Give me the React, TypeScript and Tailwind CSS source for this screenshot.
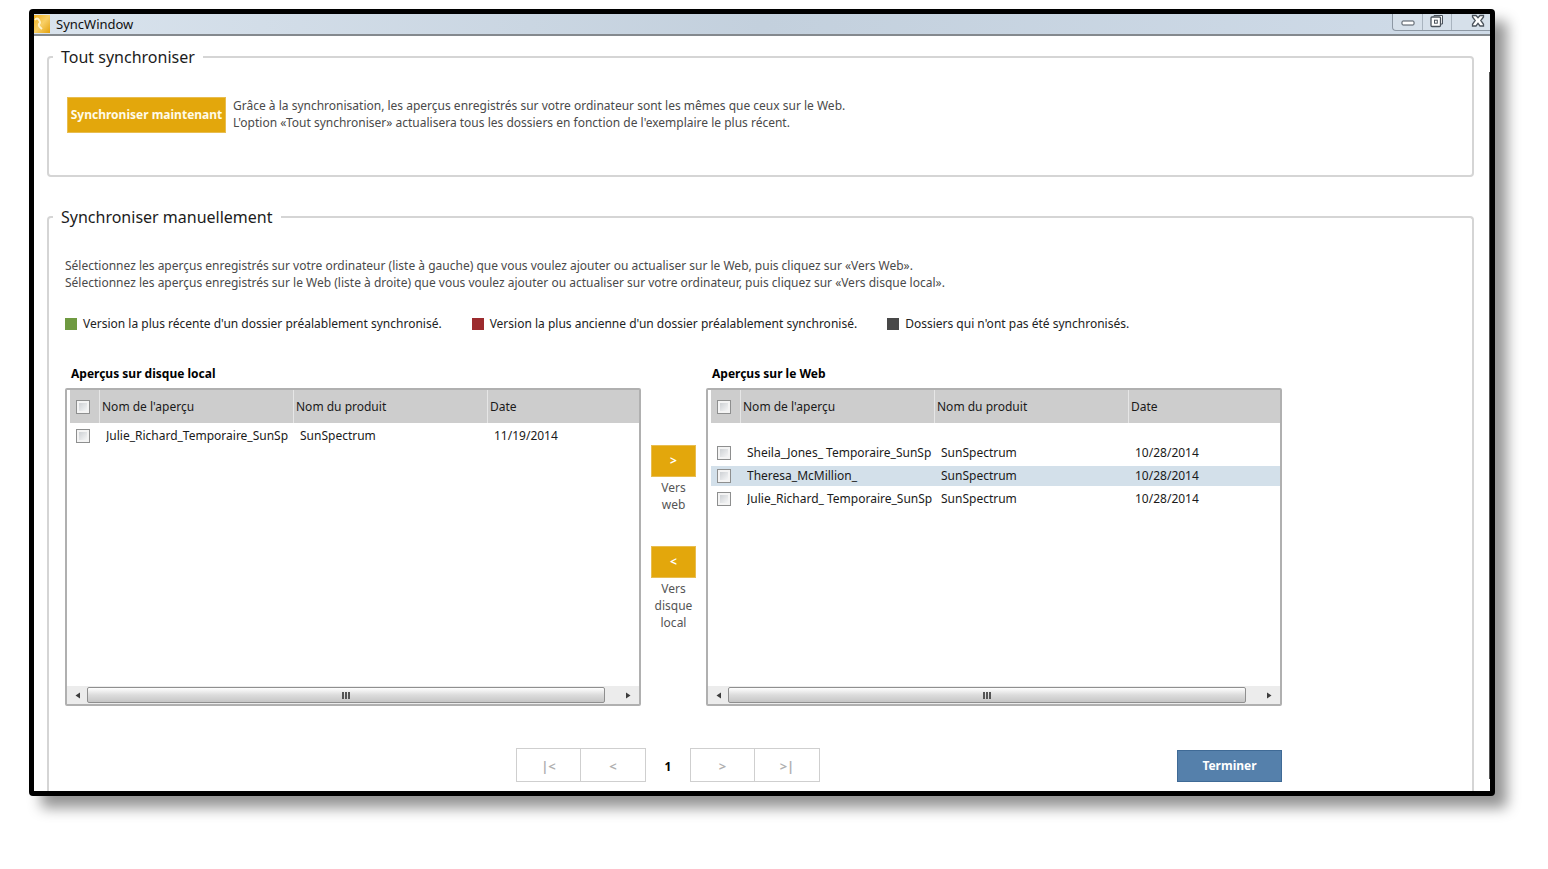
import React from 'react';

type Preview = {
  name: string;
  product: string;
  date: string;
  selected?: boolean;
};

const LOCAL_PREVIEWS: Preview[] = [
  { name: 'Julie_Richard_Temporaire_SunSp', product: 'SunSpectrum', date: '11/19/2014' },
];

const WEB_PREVIEWS: Preview[] = [
  { name: 'Sheila_Jones_ Temporaire_SunSp', product: 'SunSpectrum', date: '10/28/2014' },
  { name: 'Theresa_McMillion_', product: 'SunSpectrum', date: '10/28/2014', selected: true },
  { name: 'Julie_Richard_ Temporaire_SunSp', product: 'SunSpectrum', date: '10/28/2014' },
];

const LEGEND = [
  { color: 'bg-[#6f9a41]', label: "Version la plus récente d'un dossier préalablement synchronisé." },
  { color: 'bg-[#9c2b2e]', label: "Version la plus ancienne d'un dossier préalablement synchronisé." },
  { color: 'bg-[#484848]', label: "Dossiers qui n'ont pas été synchronisés." },
];

const Checkbox: React.FC<{ label: string }> = ({ label }) => (
  <input
    type="checkbox"
    aria-label={label}
    className="block size-[14px] appearance-none border border-[#8e8f8f] bg-linear-to-br from-[#c4c8cc] to-white shadow-[inset_0_0_0_2px_#f4f4f4] checked:bg-[#5580ab]"
  />
);

const TitleBar: React.FC = () => (
  <header className="flex h-[22px] items-start justify-between border-b-2 border-[#84898e] bg-linear-to-r from-[#d9e3ed] via-[#c3d0dd] to-[#cfdbe8]">
    <div className="flex items-center gap-[6px]">
      <svg width="16" height="18" viewBox="0 0 16 18" aria-hidden="true">
        <defs>
          <linearGradient id="appIcon" x1="0" y1="0" x2="1" y2="1">
            <stop offset="0" stopColor="#f0b020" />
            <stop offset="0.5" stopColor="#f8cf66" />
            <stop offset="1" stopColor="#e3a00c" />
          </linearGradient>
        </defs>
        <rect width="16" height="18" fill="url(#appIcon)" />
        <path d="M1 5 Q3 2 5 5 Q7 8 5 9 Q4 11 8 14" fill="none" stroke="#fff3c9" strokeWidth="2" />
      </svg>
      <h1 className="text-[13px] leading-5 text-[#111]">SyncWindow</h1>
    </div>
    <div className="flex h-[17px] rounded-bl border-b border-l border-[#8d98a4] bg-[#d6e0ea]">
      <button type="button" aria-label="Réduire" className="flex w-[30px] items-center justify-center border-r border-[#a9b4bf]">
        <svg width="14" height="14" viewBox="0 0 14 14">
          <rect x="1" y="6" width="12" height="4" rx="1" fill="#fff" stroke="#4b535c" />
        </svg>
      </button>
      <button type="button" aria-label="Restaurer" className="flex w-[29px] items-start justify-center border-r border-[#a9b4bf]">
        <svg width="14" height="14" viewBox="0 0 14 14">
          <path d="M4 2.5 V1.5 H12.5 V10 H11" fill="#fff" stroke="#4b535c" />
          <rect x="1" y="3" width="9.5" height="9.5" rx="1" fill="#fff" stroke="#4b535c" strokeWidth="1.3" />
          <rect x="4.5" y="6.2" width="2.8" height="3" fill="#fff" stroke="#4b535c" />
        </svg>
      </button>
      <button type="button" aria-label="Fermer" className="flex w-[38px] items-start justify-end pr-[5px]">
        <svg width="14" height="14" viewBox="0 0 14 14">
          <path
            d="M1.5 1.5 H5 L7 3.8 L9 1.5 H12.5 V3 L9.8 6.5 L12.5 10.3 V12 H9 L7 9.4 L5 12 H1.5 V10.3 L4.2 6.5 L1.5 3 Z"
            fill="#fff"
            stroke="#4b535c"
            strokeWidth="1.3"
          />
        </svg>
      </button>
    </div>
  </header>
);

const GroupBox: React.FC<{ title: string; className: string; children: React.ReactNode }> = ({
  title,
  className,
  children,
}) => (
  <fieldset className={`min-w-0 rounded border-2 border-[#d5d5d5] pl-4 ${className}`}>
    <legend className="-ml-3 px-2 text-base leading-6 text-[#1c1c1c]">{title}</legend>
    {children}
  </fieldset>
);

const ScrollBar: React.FC = () => (
  <div className="flex h-[18px] items-stretch bg-[#ececec]">
    <button type="button" aria-label="Défiler à gauche" className="flex w-5 items-center justify-center">
      <svg width="5" height="7" viewBox="0 0 5 7">
        <path d="M5 0.5 V6.5 L0.5 3.5 Z" fill="#3c3c3c" />
      </svg>
    </button>
    <div className="my-px flex flex-1 items-center justify-center gap-px rounded-xs border border-[#8f8f8f] bg-linear-to-b from-white via-[#dcdcdc] to-[#c6c6c6]">
      <span className="h-[7px] w-[2px] bg-[#555]" />
      <span className="h-[7px] w-[2px] bg-[#555]" />
      <span className="h-[7px] w-[2px] bg-[#555]" />
    </div>
    <button type="button" aria-label="Défiler à droite" className="ml-3 flex w-[22px] items-center justify-center">
      <svg width="5" height="7" viewBox="0 0 5 7">
        <path d="M0 0.5 V6.5 L4.5 3.5 Z" fill="#3c3c3c" />
      </svg>
    </button>
  </div>
);

const PreviewList: React.FC<{ title: string; items: Preview[]; topGap: string }> = ({ title, items, topGap }) => (
  <section className="min-w-0 flex-1">
    <h2 className="pb-[5px] pl-[6px] text-xs leading-[18px] font-bold text-black">{title}</h2>
    <div className="flex h-[318px] flex-col justify-between rounded-xs border-2 border-[#b0b0b0]">
      <div className="pl-[3px]">
        <table className="w-full table-fixed border-separate border-spacing-0 text-left text-xs text-[#1a1a1a]">
          <colgroup>
            <col className="w-[29px]" />
            <col className="w-[194px]" />
            <col className="w-[194px]" />
            <col />
          </colgroup>
          <thead className="bg-[#cdcdcd]">
            <tr className="h-[33px]">
              <th className="pl-[6px]">
                <Checkbox label={`Tout sélectionner : ${title}`} />
              </th>
              <th className="border-l border-[#e6e6e6] pl-[2px] font-normal">Nom de l'aperçu</th>
              <th className="border-l border-[#e6e6e6] pl-[2px] font-normal">Nom du produit</th>
              <th className="border-l border-[#e6e6e6] pl-[2px] font-normal">Date</th>
            </tr>
          </thead>
          <tbody>
            <tr aria-hidden="true">
              <td colSpan={4} className={topGap} />
            </tr>
            {items.map((item) => (
              <tr
                key={item.name}
                className={`h-[23px] *:border-b-3 *:border-white *:bg-clip-padding ${item.selected ? '*:bg-[#d3e0ea]' : ''}`}
              >
                <td className="pl-[6px]">
                  <Checkbox label={item.name} />
                </td>
                <td className="pl-[7px]">
                  <div className="overflow-hidden whitespace-nowrap">{item.name}</div>
                </td>
                <td className="pl-[7px]">{item.product}</td>
                <td className="pl-[7px]">{item.date}</td>
              </tr>
            ))}
          </tbody>
        </table>
      </div>
      <ScrollBar />
    </div>
  </section>
);

const TransferButton: React.FC<{ id: string; symbol: string; label: string }> = ({ id, symbol, label }) => (
  <div className="flex w-[45px] flex-col items-center gap-[2px]">
    <button
      id={id}
      type="button"
      aria-label={label}
      className="h-8 w-full border border-[#e8bd50] bg-[#e3a70c] text-xs font-bold text-white"
    >
      {symbol}
    </button>
    <label htmlFor={id} className="text-center text-xs leading-[17px] text-[#555]">
      {label}
    </label>
  </div>
);

const PagerGroup: React.FC<{ symbols: { text: string; label: string }[] }> = ({ symbols }) => (
  <div className="flex divide-x divide-[#cfcfcf] border border-[#cfcfcf]">
    {symbols.map((symbol) => (
      <button
        key={symbol.text}
        type="button"
        aria-label={symbol.label}
        className="h-8 w-16 pt-1 text-[13px] font-bold text-[#b0b0b0]"
      >
        {symbol.text}
      </button>
    ))}
  </div>
);

export default function App() {
  return (
    <main className="bg-white pt-[9px] pr-[53px] pb-[73px] pl-[29px] font-['Noto_Sans','Open_Sans',sans-serif]">
      <div className="rounded border-5 border-black bg-white shadow-[12px_12px_14px_rgba(0,0,0,0.42)]">
        <TitleBar />
        <div className="flex">
          <div className="min-w-0 flex-1 pt-[9px] pr-[15px] pl-[13px]">
            <GroupBox title="Tout synchroniser" className="pb-[42px]">
              <div className="flex items-start gap-[7px] pt-7 pl-[2px]">
                <button
                  type="button"
                  className="h-9 w-[159px] border border-[#e8bd50] bg-[#e3a70c] text-xs font-bold whitespace-nowrap text-[#fffbe8]"
                >
                  Synchroniser maintenant
                </button>
                <p className="text-xs leading-[17px] text-[#4a4a4a]">
                  Grâce à la synchronisation, les aperçus enregistrés sur votre ordinateur sont les mêmes que ceux sur le
                  Web.
                  <br />
                  L'option «Tout synchroniser» actualisera tous les dossiers en fonction de l'exemplaire le plus récent.
                </p>
              </div>
            </GroupBox>

            <GroupBox title="Synchroniser manuellement" className="mt-7 rounded-b-none border-b-0 pb-[9px]">
              <p className="pt-7 text-xs leading-[17px] text-[#4a4a4a]">
                Sélectionnez les aperçus enregistrés sur votre ordinateur (liste à gauche) que vous voulez ajouter ou
                actualiser sur le Web, puis cliquez sur «Vers Web».
                <br />
                Sélectionnez les aperçus enregistrés sur le Web (liste à droite) que vous voulez ajouter ou actualiser
                sur votre ordinateur, puis cliquez sur «Vers disque local».
              </p>

              <ul className="flex gap-[30px] pt-6 text-xs leading-[18px] text-[#222]">
                {LEGEND.map((entry) => (
                  <li key={entry.label} className="flex items-center gap-[6px]">
                    <span className={`size-3 ${entry.color}`} />
                    {entry.label}
                  </li>
                ))}
              </ul>

              <div className="flex max-w-[1217px] pt-8">
                <PreviewList title="Aperçus sur disque local" items={LOCAL_PREVIEWS} topGap="h-[3px]" />
                <div className="flex w-[65px] flex-col items-center gap-[33px] pt-20">
                  <TransferButton id="to-web" symbol=">" label="Vers web" />
                  <TransferButton id="to-local" symbol="<" label="Vers disque local" />
                </div>
                <PreviewList title="Aperçus sur le Web" items={WEB_PREVIEWS} topGap="h-5" />
              </div>

              <div className="flex max-w-[1217px] items-end justify-between pt-[42px] pl-[451px]">
                <nav aria-label="Pagination" className="flex items-center">
                  <PagerGroup
                    symbols={[
                      { text: '|<', label: 'Première page' },
                      { text: '<', label: 'Page précédente' },
                    ]}
                  />
                  <span className="w-11 pt-1 text-center text-xs font-bold text-black">1</span>
                  <PagerGroup
                    symbols={[
                      { text: '>', label: 'Page suivante' },
                      { text: '>|', label: 'Dernière page' },
                    ]}
                  />
                </nav>
                <button
                  type="button"
                  className="h-8 w-[105px] border border-[#3f6a96] bg-[#5580ab] text-xs font-bold text-white"
                >
                  Terminer
                </button>
              </div>
            </GroupBox>
          </div>
          <div className="mt-9 mb-3 w-px bg-[#555]" />
        </div>
      </div>
    </main>
  );
}
